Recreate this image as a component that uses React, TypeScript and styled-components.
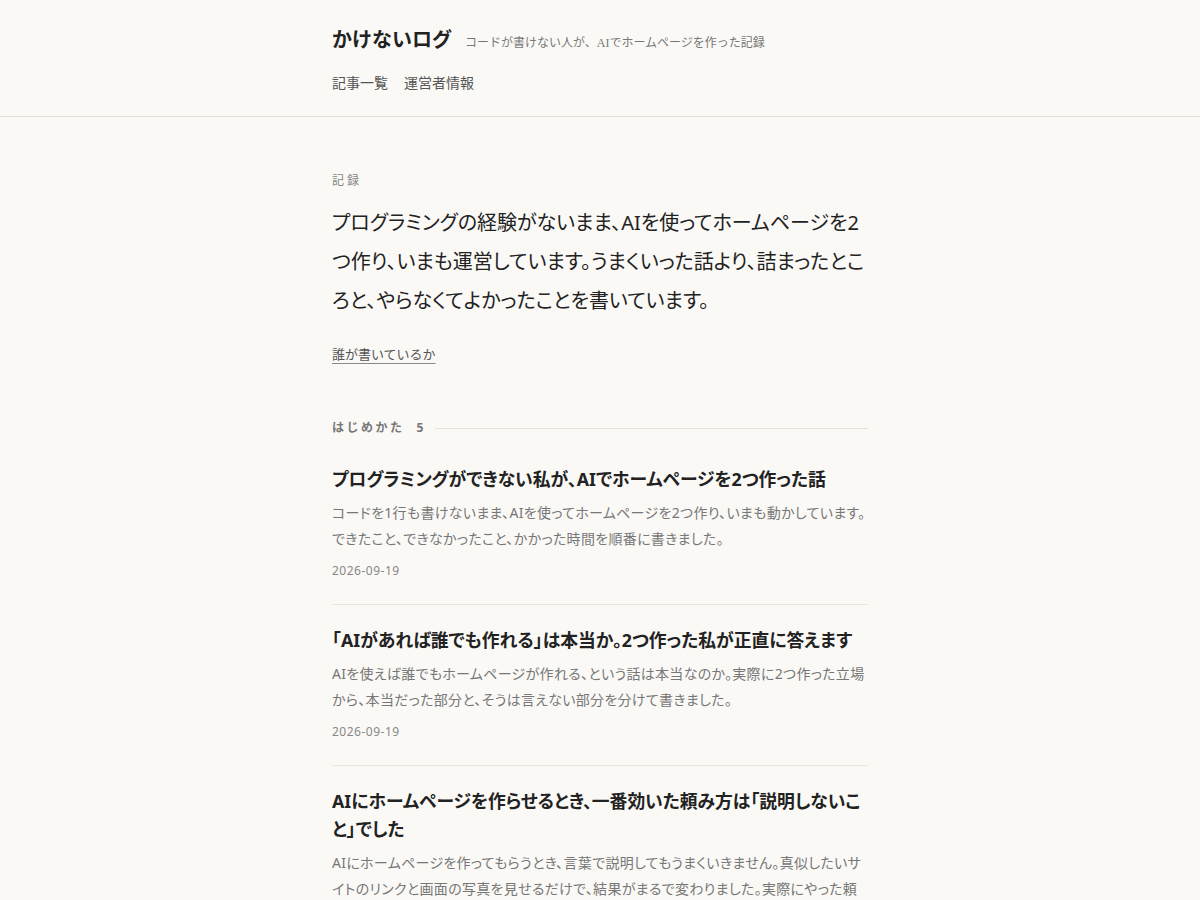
import styled, { createGlobalStyle } from 'styled-components';

const GlobalStyle = createGlobalStyle`
  html, body {
    margin: 0;
    padding: 0;
    background: #faf9f6;
  }
  body {
    font-family: "Noto Sans", "Noto Sans CJK JP", sans-serif;
    color: #222;
    -webkit-font-smoothing: antialiased;
  }
`;

const articles = [
  {
    title: 'プログラミングができない私が、AIでホームページを2つ作った話',
    excerpt:
      'コードを1行も書けないまま、AIを使ってホームページを2つ作り、いまも動かしています。できたこと、できなかったこと、かかった時間を順番に書きました。',
    date: '2026-09-19'
  },
  {
    title: '「AIがあれば誰でも作れる」は本当か。2つ作った私が正直に答えます',
    excerpt:
      'AIを使えば誰でもホームページが作れる、という話は本当なのか。実際に2つ作った立場から、本当だった部分と、そうは言えない部分を分けて書きました。',
    date: '2026-09-19'
  },
  {
    title: 'AIにホームページを作らせるとき、一番効いた頼み方は「説明しないこと」でした',
    excerpt:
      'AIにホームページを作ってもらうとき、言葉で説明してもうまくいきません。真似したいサイトのリンクと画面の写真を見せるだけで、結果がまるで変わりました。実際にやった頼み方を書きました。',
    date: '2026-09-19'
  }
];

const App = () => {
  return (
    <>
      <GlobalStyle />
      <SiteHeader>
        <Inner>
          <TitleRow>
            <SiteTitle href="#">かけないログ</SiteTitle>
            <Tagline>コードが書けない人が、AIでホームページを作った記録</Tagline>
          </TitleRow>
          <Nav>
            <NavLink href="#">記事一覧</NavLink>
            <NavLink href="#">運営者情報</NavLink>
          </Nav>
        </Inner>
      </SiteHeader>

      <Main>
        <Inner>
          {/* Intro */}
          <Intro>
            <Eyebrow>記録</Eyebrow>
            <Lead>
              プログラミングの経験がないまま、AIを使ってホームページを2つ作り、いまも運営しています。うまくいった話より、詰まったところと、やらなくてよかったことを書いています。
            </Lead>
            <AboutLink href="#">誰が書いているか</AboutLink>
          </Intro>

          {/* Article list */}
          <Section>
            <SectionHead>
              <SectionLabel>はじめかた</SectionLabel>
              <SectionCount>5</SectionCount>
              <SectionRule />
            </SectionHead>
            <ArticleList>
              {articles.map((a, i) => (
                <ArticleItem key={i}>
                  <ArticleTitle href="#">{a.title}</ArticleTitle>
                  <Excerpt>{a.excerpt}</Excerpt>
                  <DateText>{a.date}</DateText>
                </ArticleItem>
              ))}
            </ArticleList>
          </Section>
        </Inner>
      </Main>
    </>
  );
};

// Layout

const Inner = styled.div`
  width: 536px;
  margin: 0 auto;
`;

const SiteHeader = styled.header`
  padding: 26px 0 22px;
  border-bottom: 1px solid #eadcd8;
`;

const TitleRow = styled.div`
  display: flex;
  align-items: baseline;
  gap: 13px;
`;

const SiteTitle = styled.a`
  font-family: "Liberation Serif", "Noto Sans CJK JP", serif;
  font-size: 20px;
  font-weight: 700;
  color: #222;
  text-decoration: none;
  line-height: 28px;
`;

const Tagline = styled.span`
  font-family: "Liberation Serif", "Noto Sans CJK JP", serif;
  font-size: 12px;
  color: #777;
`;

const Nav = styled.nav`
  display: flex;
  gap: 16px;
  margin-top: 20px;
`;

const NavLink = styled.a`
  font-family: "Liberation Serif", "Noto Sans CJK JP", serif;
  font-size: 14px;
  line-height: 20px;
  color: #555;
  text-decoration: none;
`;

const Main = styled.main`
  padding: 55px 0 80px;
`;

// Intro

const Intro = styled.section`
  display: flex;
  flex-direction: column;
  align-items: flex-start;
`;

const Eyebrow = styled.p`
  margin: 0;
  font-family: "Liberation Serif", "Noto Sans CJK JP", serif;
  font-size: 12px;
  line-height: 18px;
  letter-spacing: 3px;
  color: #888;
`;

const Lead = styled.p`
  margin: 13px 0 0;
  font-size: 20px;
  line-height: 39px;
  color: #222;
  font-feature-settings: "palt";
`;

const AboutLink = styled.a`
  margin-top: 24px;
  font-size: 13px;
  line-height: 20px;
  color: #555;
  text-decoration: underline;
  text-underline-offset: 4px;
  text-decoration-color: #888;
`;

// Articles

const Section = styled.section`
  margin-top: 55px;
`;

const SectionHead = styled.div`
  display: flex;
  align-items: center;
  gap: 12px;
  font-size: 12px;
  line-height: 18px;
  font-weight: 700;
  color: #777;
`;

const SectionLabel = styled.span`
  letter-spacing: 2.5px;
`;

const SectionCount = styled.span`
  font-weight: 700;
`;

const SectionRule = styled.span`
  flex: 1;
  height: 1px;
  background: #e8e0d8;
`;

const ArticleList = styled.div`
  margin-top: 28px;
`;

const ArticleItem = styled.article`
  display: flex;
  flex-direction: column;
  align-items: flex-start;
  padding: 21px 0 24px;
  border-bottom: 1px solid #ece6e0;

  &:first-child {
    padding-top: 0;
  }
`;

const ArticleTitle = styled.a`
  font-size: 17.8px;
  font-weight: 700;
  line-height: 28px;
  color: #222;
  text-decoration: none;
  font-feature-settings: "palt";
`;

const Excerpt = styled.p`
  margin: 7px 0 0;
  font-size: 14px;
  line-height: 26px;
  color: #777;
  letter-spacing: 0.3px;
  font-feature-settings: "palt";
`;

const DateText = styled.span`
  margin-top: 10px;
  font-size: 12px;
  line-height: 18px;
  color: #888;
  letter-spacing: 0.5px;
`;

export default App;
